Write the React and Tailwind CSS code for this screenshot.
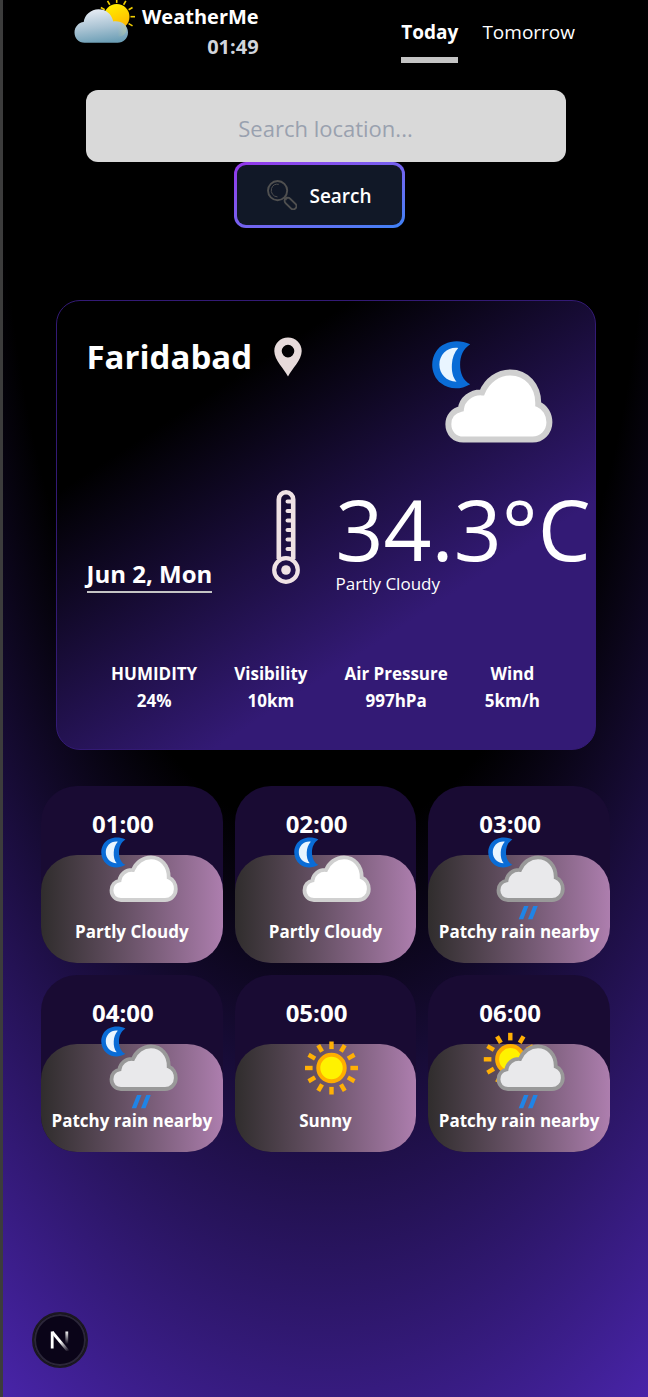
import React from "react";

const HOURS = [
  { time: "01:00", text: "Partly Cloudy", kind: "moon" },
  { time: "02:00", text: "Partly Cloudy", kind: "moon" },
  { time: "03:00", text: "Patchy rain nearby", kind: "moon-rain" },
  { time: "04:00", text: "Patchy rain nearby", kind: "moon-rain" },
  { time: "05:00", text: "Sunny", kind: "sun" },
  { time: "06:00", text: "Patchy rain nearby", kind: "sun-rain" },
];

const STATS = [
  { label: "HUMIDITY", value: "24%" },
  { label: "Visibility", value: "10km" },
  { label: "Air Pressure", value: "997hPa" },
  { label: "Wind", value: "5km/h" },
];

const RAYS = [0, 30, 60, 90, 120, 150, 180, 210, 240, 270, 300, 330];

function Sun({ cx, cy }) {
  return (
    <g transform={`translate(${cx} ${cy})`}>
      {RAYS.map((a) => (
        <rect key={a} x="-2.2" y="-26.5" width="4.4" height="7.6" fill="#ffb005" transform={`rotate(${a})`} />
      ))}
      <circle r="13.2" fill="#fff200" stroke="#ffae00" strokeWidth="4" />
    </g>
  );
}

function WeatherIcon({ kind, className }) {
  const rain = kind.endsWith("rain");
  return (
    <svg viewBox="-4 0 84 84" className={className} aria-hidden="true">
      {kind.startsWith("moon") && (
        <g transform="translate(-1.300 -1.200) scale(1.090)">
          <path
            d="M24.500 4.200C17 .8 8.500 2.500 4.500 8.500C.8 14.200 1.800 22.600 7.500 27C12.200 30.600 18.500 31 24.500 27.500C20.300 25.500 18.600 21 18.600 16.200C18.600 11.200 20.300 7 24.500 4.200Z"
            fill="#0a6cd6"
          />
          <path
            d="M17.500 6.300C11.500 5.500 6.500 10 6.500 16C6.500 21.500 10.600 26 16.500 26C14.300 23.500 13.600 20 13.800 16C14 12 15.200 9 17.500 6.300Z"
            fill="#e9f5ff"
          />
        </g>
      )}
      {kind === "sun" && <Sun cx={38.5} cy={43} />}
      {kind === "sun-rain" && <Sun cx={23.3} cy={34.3} />}
      {kind !== "sun" && (
        <path
          d="M21 64C15.500 64 11.500 60 11.500 54.300C11.500 49 15 45.500 19.500 44.500C20 38.500 26 33.500 33 34C36 26.500 43 21.300 51 21.300C61 21.300 69 29.500 68.700 41.500C73 43.200 75.800 48 75.800 53C75.800 59.200 71 64 65 64Z"
          fill={rain ? "#e9e9eb" : "#ffffff"}
          stroke={rain ? "#999999" : "#d0d0d0"}
          strokeWidth="3.800"
        />
      )}
      {rain && (
        <g fill="#1f84e6">
          <path d="M37 70h4.500l-5.300 13.300h-4.500z" />
          <path d="M46.300 70h4.500l-5.300 13.300h-4.500z" />
        </g>
      )}
    </svg>
  );
}

function Logo() {
  return (
    <svg viewBox="0 0 62 44" className="h-11 w-[62px]" aria-hidden="true">
      <defs>
        <linearGradient id="logoCloud" x1="0.3" y1="0" x2="0.5" y2="1">
          <stop offset="0" stopColor="#e8edf5" />
          <stop offset="0.55" stopColor="#a9c3d3" />
          <stop offset="1" stopColor="#6d9fb6" />
        </linearGradient>
        <linearGradient id="logoSun" x1="0.3" y1="0" x2="0.7" y2="1">
          <stop offset="0" stopColor="#ffee00" />
          <stop offset="1" stopColor="#ffb400" />
        </linearGradient>
        <linearGradient id="logoWarm" x1="0" y1="0" x2="1" y2="0">
          <stop offset="0.4" stopColor="#d8d890" stopOpacity="0" />
          <stop offset="1" stopColor="#d3da88" stopOpacity="0.700" />
        </linearGradient>
      </defs>
      <g transform="translate(42.700 16.700)">
        {RAYS.map((a) => (
          <rect key={a} x="-0.8" y="-18.300" width="1.600" height="4.500" fill="#f2cf00" transform={`rotate(${a})`} />
        ))}
        <circle r="12.800" fill="url(#logoSun)" />
      </g>
      <path
        d="M10.500 42.700C4.500 42.700 0.500 38 0.500 32.500C0.500 27 4.500 22.500 9.700 22C10.500 15 17 9.300 24.500 9.300C31.500 9.300 37.500 13.600 39.300 21.500C47.500 20.500 54 25.500 54 32.500C54 38.500 49.500 42.700 43.500 42.700Z"
        fill="url(#logoCloud)"
      />
      <circle cx="45" cy="29" r="7.500" fill="url(#logoWarm)" opacity="0.500" />
    </svg>
  );
}

function Magnifier() {
  return (
    <svg viewBox="0 0 30 30" className="size-[30px]" fill="none" stroke="#505050" aria-hidden="true">
      <circle cx="10.600" cy="10.600" r="9.600" strokeWidth="1.900" />
      <path d="M11.800 4.300A6.500 6.500 0 0 0 4.500 8.500A6.500 6.500 0 0 0 10.500 16.900" strokeWidth="1" />
      <path d="M16.800 17.500L19.500 20M18.200 16.300L20.500 18.700" strokeWidth="1.300" />
      <rect x="-7" y="-3.200" width="14" height="6.400" rx="3.200" strokeWidth="1.900" transform="translate(23.500 23.500) rotate(45)" />
    </svg>
  );
}

function Pin() {
  return (
    <svg viewBox="0 0 28 40" className="h-10 w-7" aria-hidden="true">
      <path
        fillRule="evenodd"
        fill="#e6dada"
        d="M14 0.500C6.300 0.500 0.300 6.500 0.300 14C0.300 23 10 31.500 14 39.500C18 31.500 27.700 23 27.700 14C27.700 6.500 21.700 0.500 14 0.500ZM14 7.800A6.300 6.300 0 1 1 14 20.400A6.300 6.300 0 1 1 14 7.800Z"
      />
    </svg>
  );
}

function Thermometer() {
  return (
    <svg viewBox="0 0 28 95" className="h-[95px] w-7" fill="none" stroke="#efe2e4" aria-hidden="true">
      <path d="M6.800 69V9.500A7.200 7.200 0 0 1 21.200 9.500V69" strokeWidth="4.600" />
      <path d="M20 11.500H15.500M20 21H15.500M20 30.500H15.500M20 40H15.500M20 49.500H15.500M20 59H15.500" strokeWidth="4" strokeLinecap="round" />
      <circle cx="14" cy="80" r="11.800" strokeWidth="4.200" />
      <circle cx="14" cy="80" r="4.800" fill="#efe2e4" stroke="none" />
    </svg>
  );
}

function HourCard({ time, text, kind }) {
  return (
    <li className="rounded-[36px] bg-[#190b33]">
      <div className="h-[69px] pt-[22px] pr-[18px] text-center text-[24px] leading-8 font-bold">{time}</div>
      <div className="flex flex-col items-center rounded-[36px] bg-linear-to-r from-[#302d2d] to-[#ad7eae] pb-[19px]">
        <WeatherIcon kind={kind} className="-mt-[19px] ml-3 size-[84px]" />
        <p className="text-[17px] leading-6 font-bold whitespace-nowrap">{text}</p>
      </div>
    </li>
  );
}

export default function App() {
  return (
    <div className="min-h-screen border-l-[3px] border-[#3c3c3c] bg-[radial-gradient(125%_125%_at_50%_10%,#000_40%,#63e_100%)] font-['Open_Sans','Noto_Sans',sans-serif] text-white">
      <header className="flex h-[90px] items-start justify-between pr-[73px] pl-[71px]">
        <div className="flex items-start gap-[6px]">
          <Logo />
          <div className="pt-[2px] text-right text-[20px] leading-[30px] font-bold">
            <h1>WeatherMe</h1>
            <p className="text-gray-300">01:49</p>
          </div>
        </div>
        <nav className="flex gap-6 pt-[18px] text-[19px] leading-7">
          <a href="#today" className="border-b-[6px] border-[#c4c4c4] pb-[11px] font-bold">
            Today
          </a>
          <a href="#tomorrow">Tomorrow</a>
        </nav>
      </header>

      <main className="flex flex-col items-center px-[38px]">
        <form className="flex w-full max-w-[480px] flex-col items-center" onSubmit={(e) => e.preventDefault()}>
          <input
            type="text"
            aria-label="Search location"
            placeholder="Search location..."
            className="h-[72px] w-full rounded-xl bg-[#d9d9d9] pt-1 text-center text-[22px] text-gray-800 placeholder:text-gray-400"
          />
          <button type="submit" className="mr-3 rounded-xl bg-linear-to-br from-[#9333ea] to-[#3b82f6] p-[3px]">
            <span className="flex h-[60px] items-center gap-3 rounded-[9px] bg-[#111827] px-[30px] text-[19px] font-semibold">
              <Magnifier />
              <span className="pt-[2px]">Search</span>
            </span>
          </button>
        </form>

        <section className="mt-18 w-full max-w-[540px] rounded-3xl border border-[#331a75] bg-[linear-gradient(147deg,#000_24%,#331a75_69%)] pt-9 pb-[35px]">
          <div className="flex items-start justify-between pr-[39px] pl-[30px]">
            <div className="flex items-center gap-[22px]">
              <h2 className="text-[33px] leading-10 font-bold">Faridabad</h2>
              <Pin />
            </div>
            <WeatherIcon kind="moon" className="mt-[2px] size-[132px]" />
          </div>
          <div className="mt-[19px] flex items-start pl-[30px]">
            <div className="w-[185px] pt-[70px]">
              <p className="w-fit border-b-2 border-[#c4c4c4] pb-[3px] text-[24px] leading-7 font-bold">Jun 2, Mon</p>
            </div>
            <Thermometer />
            <div className="ml-9 whitespace-nowrap">
              <p className="pb-1 text-[84px] leading-[78px]">34.3°C</p>
              <p className="text-[17px] leading-6">Partly Cloudy</p>
            </div>
          </div>
          <dl className="mt-16 flex justify-center gap-[37px] text-center text-[17px] leading-[27px] font-bold">
            {STATS.map((s) => (
              <div key={s.label}>
                <dt>{s.label}</dt>
                <dd>{s.value}</dd>
              </div>
            ))}
          </dl>
        </section>

        <ul className="mt-9 grid w-full grid-cols-3 gap-3">
          {HOURS.map((h) => (
            <HourCard key={h.time} {...h} />
          ))}
        </ul>
      </main>

      <button
        type="button"
        aria-label="Open developer tools"
        className="fixed bottom-[29px] left-8 flex size-14 items-center justify-center rounded-full border-2 border-[#1b1820] bg-[#0a0418] inset-ring-2 inset-ring-[#2b2639]"
      >
        <svg viewBox="0 0 20 22" className="h-[22px] w-5" fill="none" aria-hidden="true">
          <defs>
            <linearGradient id="nDiag" gradientUnits="userSpaceOnUse" x1="11" y1="12" x2="18" y2="21">
              <stop offset="0" stopColor="#fff" />
              <stop offset="1" stopColor="#fff" stopOpacity="0.100" />
            </linearGradient>
            <linearGradient id="nStem" gradientUnits="userSpaceOnUse" x1="0" y1="2" x2="0" y2="15">
              <stop offset="0" stopColor="#fff" />
              <stop offset="1" stopColor="#fff" stopOpacity="0" />
            </linearGradient>
          </defs>
          <path d="M2.200 19.500V2.500" stroke="#fff" strokeWidth="2.800" />
          <path d="M2.200 3L18 22" stroke="url(#nDiag)" strokeWidth="2.800" />
          <path d="M16.800 2.500V15" stroke="url(#nStem)" strokeWidth="2.800" />
        </svg>
      </button>
    </div>
  );
}
